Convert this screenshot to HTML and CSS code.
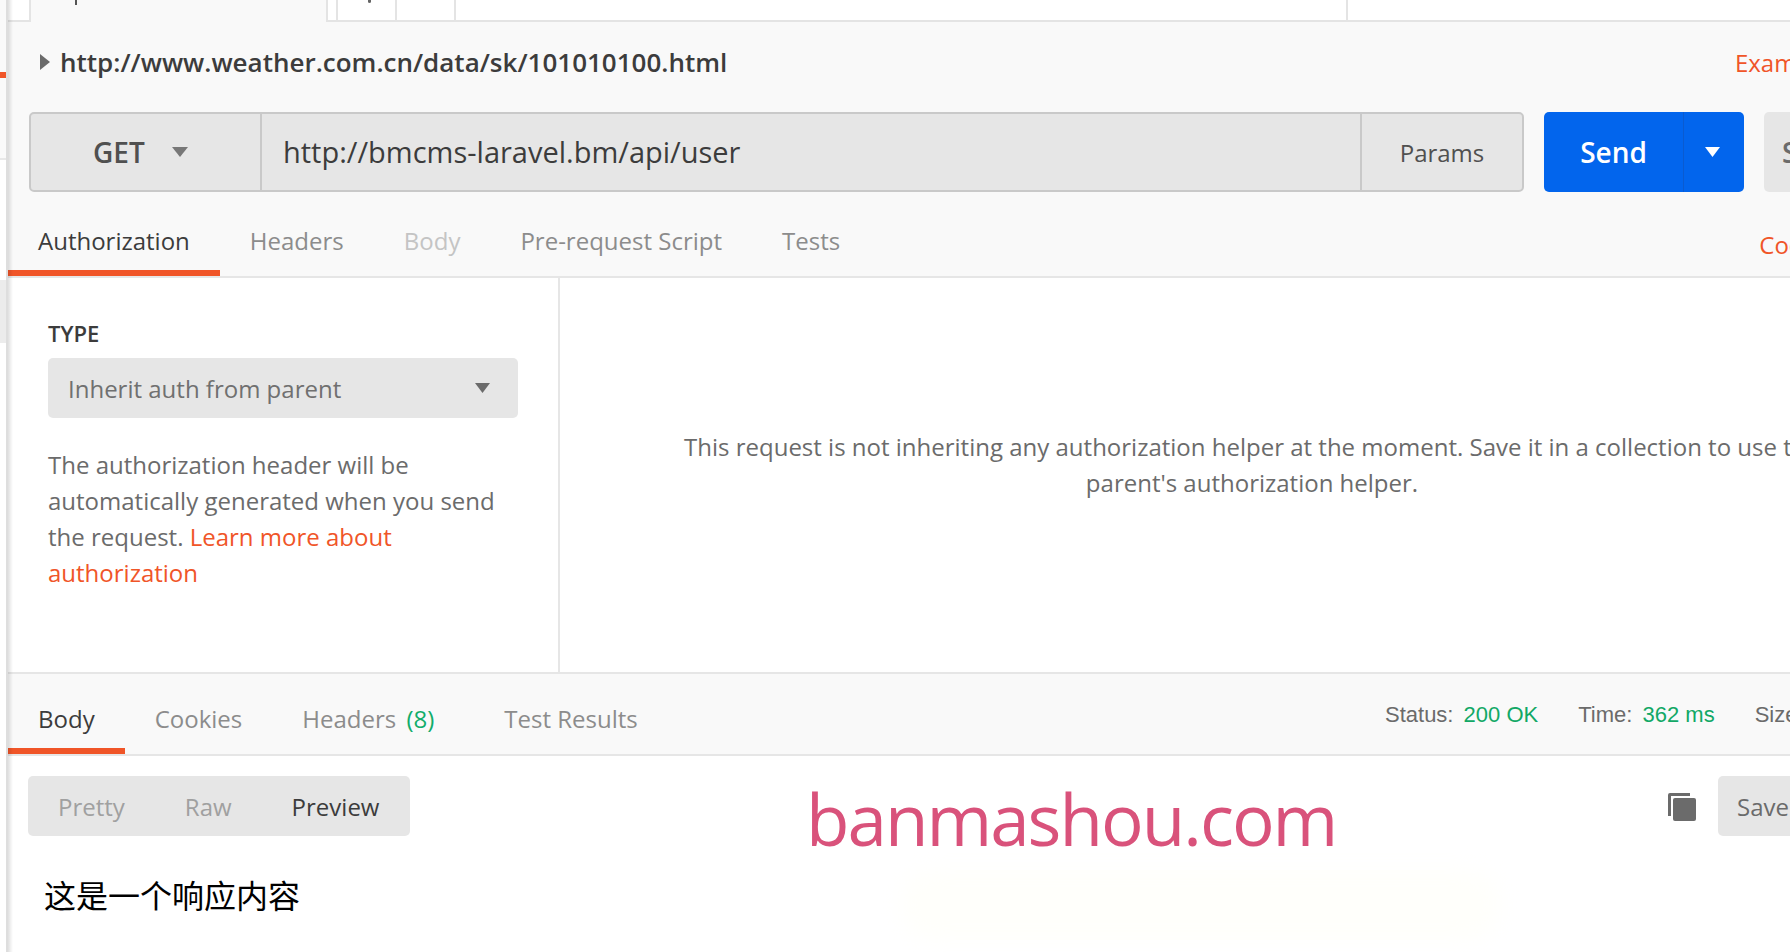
FILE: index.html
```html
<!DOCTYPE html>
<html lang="en">

<head>
    <meta charset="UTF-8">
    <title>Postman</title>
    <link rel="stylesheet" href="styles.css">
</head>

<body>
    <div class="sidebarEdge">
        <div class="edgeTop">
            <div class="edgeMark"></div>
        </div>
        <div class="edgeRow"></div>
    </div>
    <div class="main">
        <div class="tabStrip">
            <div class="tab tabActive"><i class="tabTick"></i></div>
            <div class="tab tabPlus"><i class="tabDot"></i></div>
            <div class="tab tabBlank"></div>
            <div class="tab tabFill"></div>
        </div>

        <div class="requestPane">
            <div class="nameRow">
                <svg class="caret" width="10" height="16" viewBox="0 0 10 16"><path d="M0 0 L10 8 L0 16 Z" fill="#6b6b6b" /></svg>
                <span class="reqName">http://www.weather.com.cn/data/sk/101010100.html</span>
                <span class="orangeLink exampleLink">Examples</span>
            </div>

            <div class="urlRow">
                <div class="urlBar">
                    <div class="method">
                        <span>GET</span>
                        <svg width="16" height="10" viewBox="0 0 16 10"><path d="M0 0 H16 L8 10 Z" fill="#777" /></svg>
                    </div>
                    <div class="urlText">http://bmcms-laravel.bm/api/user</div>
                    <div class="params">Params</div>
                </div>
                <div class="sendBtn">
                    <span class="sendLabel">Send</span>
                    <span class="sendArrow"><svg width="15" height="10" viewBox="0 0 15 10"><path d="M0 0 H15 L7.5 10 Z" fill="#fff" /></svg></span>
                </div>
                <div class="saveTop">Save</div>
            </div>

            <div class="tabsRow reqTabs">
                <span class="tabItem on">Authorization</span>
                <span class="tabItem">Headers</span>
                <span class="tabItem faint">Body</span>
                <span class="tabItem">Pre-request Script</span>
                <span class="tabItem">Tests</span>
                <span class="orangeLink codeLink">Code</span>
            </div>
        </div>

        <div class="authPane">
            <div class="authLeft">
                <div class="typeLabel">TYPE</div>
                <div class="typeSelect">
                    <span>Inherit auth from parent</span>
                    <svg width="15" height="10" viewBox="0 0 15 10"><path d="M0 0 H15 L7.5 10 Z" fill="#6b6b6b" /></svg>
                </div>
                <p class="authHelp">The authorization header will be automatically generated when you send the request. <span class="orangeLink">Learn more about authorization</span></p>
            </div>
            <div class="authRight">
                <p class="authMsg">This request is not inheriting any authorization helper at the moment. Save it in a collection to use the parent's authorization helper.</p>
            </div>
        </div>

        <div class="responsePane">
            <div class="tabsRow resTabs">
                <span class="tabItem on">Body</span>
                <span class="tabItem">Cookies</span>
                <span class="tabItem tabCount">Headers <em class="count">(8)</em></span>
                <span class="tabItem">Test Results</span>
                <div class="resMeta">
                    <span>Status: <b>200 OK</b></span>
                    <span>Time: <b>362 ms</b></span>
                    <span>Size: <b>250 B</b></span>
                </div>
            </div>
            <div class="resBar">
                <div class="viewSwitch">
                    <span>Pretty</span>
                    <span>Raw</span>
                    <span class="on">Preview</span>
                </div>
                <svg class="copyIcon" width="28" height="28" viewBox="0 0 28 28">
                    <path d="M2 0 H22 V3 H3 V23 H0 V2 Q0 0 2 0 Z" fill="#6b6b6b" />
                    <rect x="5" y="5" width="23" height="23" rx="2" fill="#6b6b6b" />
                </svg>
                <div class="saveRes">Save Response</div>
            </div>
            <div class="resBody">这是一个响应内容</div>
        </div>
    </div>
    <div class="edgeShadow"></div>
    <div class="wmHaze"></div>
    <div class="watermark">banmashou.com</div>
</body>

</html>
```

FILE: styles.css
```css
html, body {
    margin: 0;
    height: 952px;
    overflow: hidden;
}

body {
    display: flex;
    background: #fff;
    font-family: "Open Sans", "Noto Sans", sans-serif;
    color: #505050;
}

/* strip of the sidebar that is still visible */
.sidebarEdge {
    width: 6px;
    flex-shrink: 0;
    border-right: 2px solid #dedede;
}

.edgeTop {
    box-sizing: border-box;
    height: 160px;
    padding-top: 72px;
    background: #fafafa;
    border-bottom: 2px solid #e8e8e8;
}

.edgeMark {
    height: 6px;
    background: #f05528;
}

.edgeRow {
    margin-top: 120px;
    height: 63px;
    background: #ececec;
}

.edgeShadow {
    position: absolute;
    top: 0;
    left: 8px;
    width: 5px;
    height: 952px;
    background: linear-gradient(to right, rgba(0, 0, 0, 0.12), rgba(0, 0, 0, 0));
    pointer-events: none;
}

.main {
    flex: 1;
    min-width: 0;
    display: flex;
    flex-direction: column;
}

.tabStrip {
    display: flex;
    flex-shrink: 0;
    height: 20px;
    padding-left: 21px;
    border-bottom: 2px solid #e4e4e4;
}

.tab {
    box-sizing: border-box;
    flex-shrink: 0;
    height: 20px;
    border-right: 2px solid #e4e4e4;
    position: relative;
}

.tabActive {
    width: 299px;
    height: 22px;
    margin-right: 8px;
    background: #f9f9f9;
    border-left: 2px solid #e4e4e4;
}

.tabTick {
    position: absolute;
    left: 44px;
    top: 0;
    width: 2px;
    height: 5px;
    background: #555;
}

.tabDot {
    position: absolute;
    left: 30px;
    top: 0;
    width: 3px;
    height: 3px;
    border-radius: 0 0 2px 2px;
    background: #666;
}

.tabPlus {
    width: 61px;
    border-left: 2px solid #e4e4e4;
}

.tabBlank {
    width: 59px;
}

.tabFill {
    width: 892px;
}

.requestPane {
    background: #f9f9f9;
    border-bottom: 2px solid #e6e6e6;
    height: 254px;
    flex-shrink: 0;
}

.nameRow {
    display: flex;
    align-items: center;
    height: 80px;
    padding-left: 32px;
}

.caret {
    margin-right: 10px;
}

.reqName {
    font-size: 26px;
    font-weight: 600;
    color: #3c3c3c;
    white-space: nowrap;
}

.orangeLink {
    color: #f05528;
}

.exampleLink {
    margin-left: auto;
    margin-right: -52px;
    font-size: 24px;
    white-space: nowrap;
}

.urlRow {
    display: flex;
    margin: 10px 0 0 21px;
    height: 80px;
}

.urlBar {
    box-sizing: border-box;
    width: 1495px;
    flex-shrink: 0;
    display: flex;
    align-items: stretch;
    background: #e6e6e6;
    border: 2px solid #c9c9c9;
    border-radius: 5px;
}

.method {
    width: 231px;
    flex-shrink: 0;
    box-sizing: border-box;
    border-right: 2px solid #c9c9c9;
    display: flex;
    align-items: center;
    padding-left: 62px;
    gap: 27px;
    font-size: 28px;
    font-weight: 600;
    color: #505050;
}

.urlText {
    flex: 1;
    display: flex;
    align-items: center;
    padding: 0 0 2px 21px;
    font-size: 29px;
    color: #3c3c3c;
}

.params {
    width: 162px;
    flex-shrink: 0;
    box-sizing: border-box;
    border-left: 2px solid #c9c9c9;
    display: flex;
    align-items: center;
    justify-content: center;
    font-size: 24px;
    color: #505050;
}

.sendBtn {
    margin-left: 20px;
    width: 200px;
    flex-shrink: 0;
    display: flex;
    background: #0265ed;
    border-radius: 5px;
    color: #fff;
}

.sendLabel {
    width: 140px;
    box-sizing: border-box;
    border-right: 1px solid #0a5bd0;
    display: flex;
    align-items: center;
    justify-content: center;
    font-size: 28px;
    font-weight: 600;
}

.sendArrow {
    flex: 1;
    display: flex;
    align-items: center;
    justify-content: center;
    padding-right: 4px;
}

.saveTop {
    margin-left: 20px;
    width: 120px;
    flex-shrink: 0;
    box-sizing: border-box;
    background: #e6e6e6;
    border-radius: 5px;
    display: flex;
    align-items: center;
    padding-left: 18px;
    font-size: 28px;
    font-weight: 600;
    color: #6b6b6b;
}

.tabsRow {
    display: flex;
    position: relative;
}

.reqTabs {
    margin-top: 32px;
    height: 52px;
}

.tabItem {
    font-size: 24px;
    line-height: 33px;
    color: #8c8c8c;
    white-space: nowrap;
    padding: 0 30px;
    height: 52px;
    box-sizing: border-box;
    position: relative;
}

.tabItem.faint {
    color: #c4c4c4;
}

.tabItem.on {
    color: #3c3c3c;
}

.tabItem.on::after {
    content: "";
    position: absolute;
    left: 0;
    right: 0;
    bottom: 0;
    height: 6px;
    background: #f05528;
}

.tabItem.tabCount {
    padding-right: 40px;
}

.codeLink {
    margin-left: auto;
    margin-right: -27px;
    padding-top: 4px;
    font-size: 24px;
    line-height: 33px;
}

.authPane {
    display: flex;
    height: 394px;
    flex-shrink: 0;
    border-bottom: 2px solid #e6e6e6;
}

.authLeft {
    width: 552px;
    flex-shrink: 0;
    box-sizing: border-box;
    padding: 42px 40px 0 40px;
    border-right: 2px solid #e6e6e6;
}

.typeLabel {
    font-size: 22px;
    font-weight: 600;
    color: #3c3c3c;
    line-height: 27px;
}

.typeSelect {
    margin-top: 11px;
    height: 60px;
    width: 470px;
    background: #e6e6e6;
    border-radius: 5px;
    display: flex;
    align-items: center;
    justify-content: space-between;
    padding: 0 28px 0 20px;
    box-sizing: border-box;
    font-size: 24px;
    color: #707070;
}

.authHelp {
    margin: 29px 0 0;
    width: 470px;
    font-size: 24px;
    line-height: 36px;
    color: #6b6b6b;
}

.authRight {
    flex: 1;
    min-width: 0;
    padding-top: 151px;
    overflow: hidden;
}

.authMsg {
    margin: 0 0 0 92px;
    width: 1200px;
    font-size: 24px;
    line-height: 36px;
    color: #6b6b6b;
    text-align: center;
}

.responsePane {
    flex: 1;
    min-width: 0;
}

.resTabs {
    background: #f9f9f9;
    height: 82px;
    padding-top: 28px;
    box-sizing: border-box;
    border-bottom: 2px solid #e6e6e6;
}

.count {
    font-style: normal;
    color: #12ad6b;
    margin-left: 4px;
}

.resMeta {
    position: absolute;
    top: 28px;
    left: 1377px;
    display: flex;
    gap: 40px;
    font-family: "Liberation Sans", Arial, sans-serif;
    font-size: 22px;
    color: #6b6b6b;
    white-space: nowrap;
}

.resMeta b {
    font-weight: 400;
    color: #12a866;
    margin-left: 4px;
}

.resBar {
    display: flex;
    align-items: flex-start;
    padding: 20px 0 0 20px;
}

.viewSwitch {
    display: flex;
    flex-shrink: 0;
    align-items: center;
    height: 60px;
    width: 382px;
    box-sizing: border-box;
    background: #e6e6e6;
    border-radius: 5px;
    padding-left: 30px;
    gap: 60px;
    font-size: 24px;
    color: #a0a0a0;
}

.viewSwitch .on {
    color: #3c3c3c;
}

.copyIcon {
    margin: 17px 0 0 1258px;
    flex-shrink: 0;
}

.saveRes {
    margin-left: 22px;
    flex-shrink: 0;
    height: 60px;
    padding: 0 19px;
    background: #e6e6e6;
    border-radius: 5px;
    display: flex;
    align-items: center;
    font-size: 24px;
    color: #6b6b6b;
    white-space: nowrap;
}

.resBody {
    margin: 39px 0 0 36px;
    font-family: "Liberation Serif", "Noto Sans CJK SC", serif;
    font-size: 32px;
    line-height: 44px;
    color: #000;
}

.wmHaze {
    position: absolute;
    left: 900px;
    top: 870px;
    width: 600px;
    height: 70px;
    border-radius: 40px;
    background: #fffffb;
    filter: blur(10px);
}

.watermark {
    position: absolute;
    left: 806px;
    top: 775px;
    font-size: 71px;
    line-height: 88px;
    letter-spacing: -2px;
    color: #d9527b;
    white-space: nowrap;
}
```
